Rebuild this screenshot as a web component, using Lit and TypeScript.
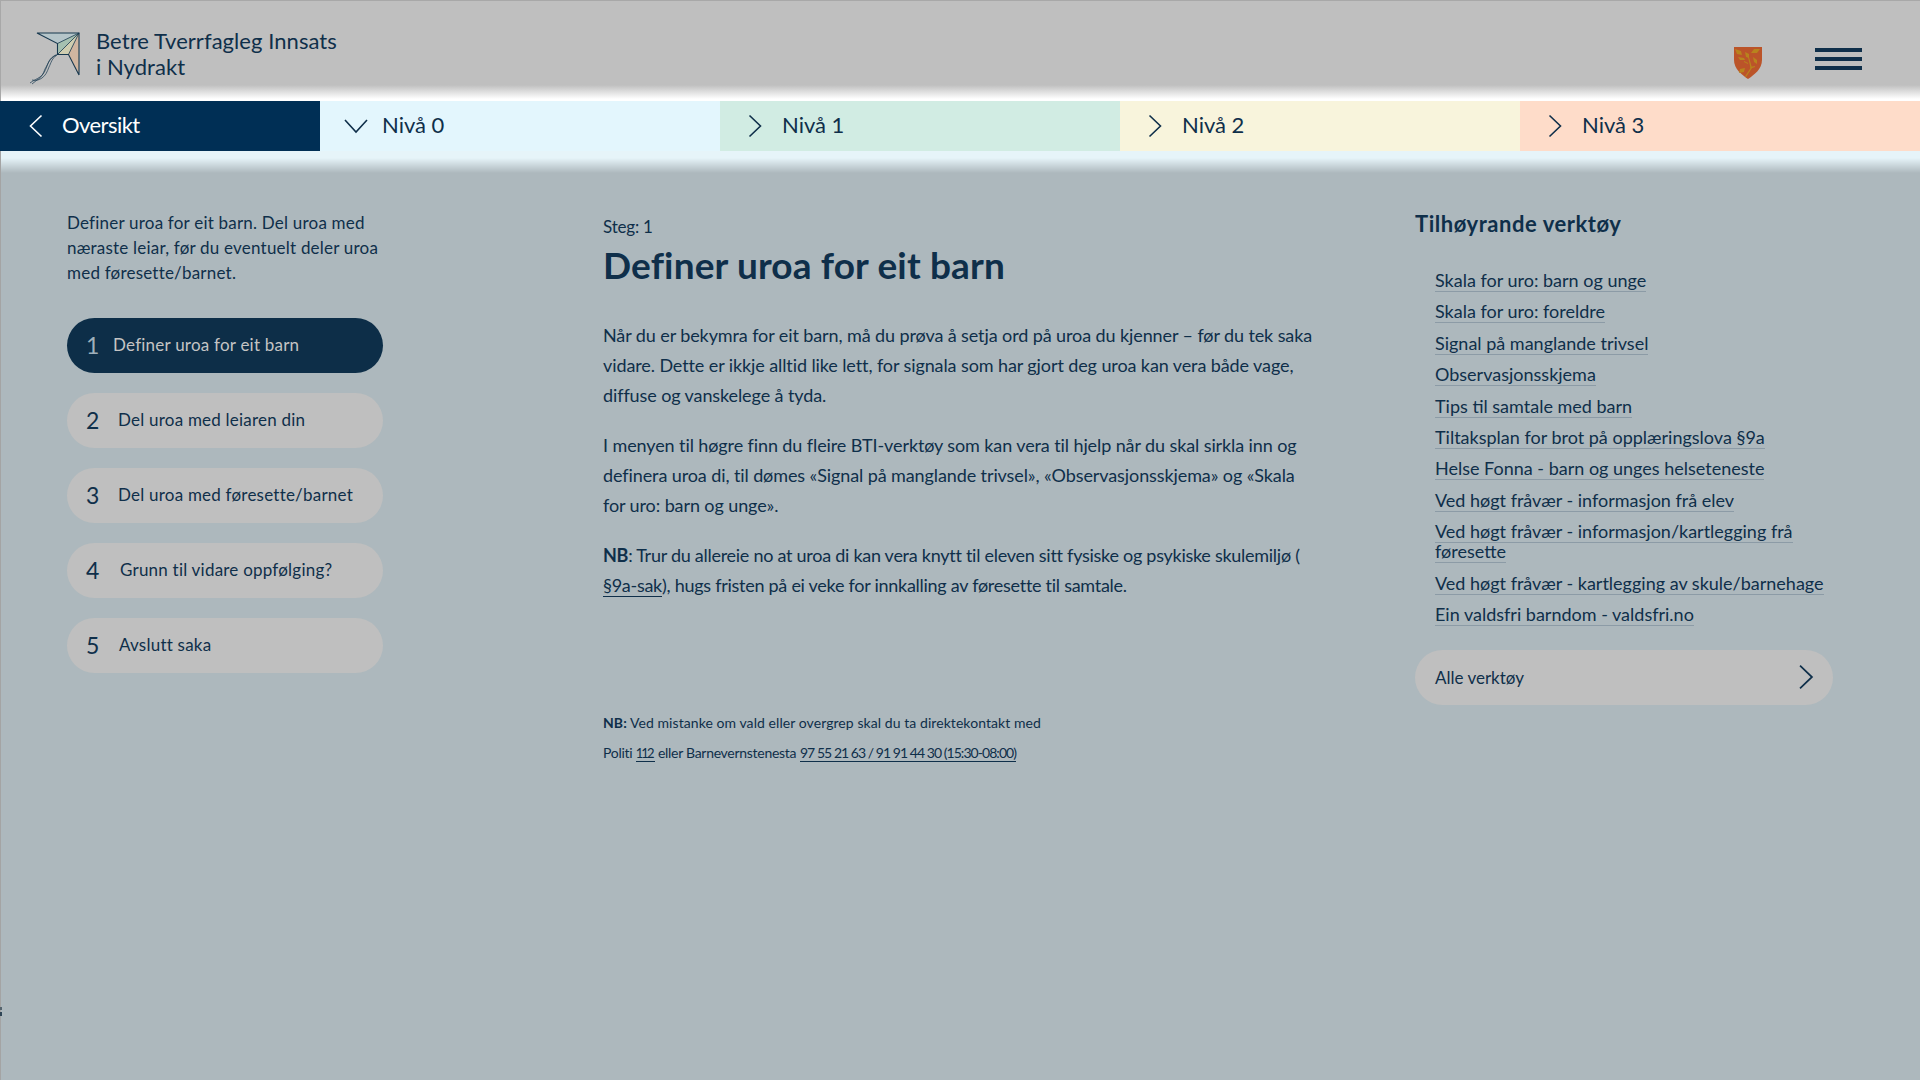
import { LitElement, html, css, svg } from "lit";
import { customElement } from "lit/decorators.js";

const chevron = (d: string) => html`<svg class="chev" viewBox="0 0 24 24" fill="none" stroke="currentColor" stroke-width="1.6"><path d=${d}></path></svg>`;
const RIGHT = "M6.5 1.5 L17.5 12 L6.5 22.5";
const LEFT = "M17.5 1.5 L6.5 12 L17.5 22.5";
const DOWN = "M1 6 L12 18 L23 6";

const steps = ["Definer uroa for eit barn", "Del uroa med leiaren din", "Del uroa med føresette/barnet", "Grunn til vidare oppfølging?", "Avslutt saka"];
const gaps = [27, 32, 32, 34, 33];
const tools = [
  "Skala for uro: barn og unge", "Skala for uro: foreldre", "Signal på manglande trivsel", "Observasjonsskjema",
  "Tips til samtale med barn", "Tiltaksplan for brot på opplæringslova §9a", "Helse Fonna - barn og unges helseteneste",
  "Ved høgt fråvær - informasjon frå elev", "Ved høgt fråvær - informasjon/kartlegging frå føresette",
  "Ved høgt fråvær - kartlegging av skule/barnehage", "Ein valdsfri barndom - valdsfri.no",
];

@customElement("app-root")
export class AppRoot extends LitElement {
  static styles = css`
    :host { display: block; position: relative; width: 1920px; min-height: 1080px; background: #adb8bd; color: #0f2f4a; font-family: "Lato", "Liberation Sans", sans-serif; box-sizing: border-box; overflow: hidden; }
    * { box-sizing: border-box; }
    header { height: 101px; display: flex; align-items: flex-start; background: linear-gradient(#bfbfbf 0, #bfbfbf 84px, #ffffff 98px); border-top: 1px solid #a8a8a8; border-left: 1px solid #a8a8a8; padding: 0 58px 0 28px; }
    .logo { width: 58px; height: 68px; margin-top: 27px; flex: none; }
    .brand { margin: 27px 0 0 9px; font-size: 22px; line-height: 26px; letter-spacing: 0.05px; flex: 1; }
    .crest { width: 30px; height: 34px; margin-top: 45px; }
    .burger { width: 47px; margin: 47px 0 0 52px; display: flex; flex-direction: column; gap: 5px; }
    .burger i { display: block; height: 4px; background: #0f2f4a; }
    nav { display: flex; height: 50px; }
    nav a { display: flex; align-items: center; font-size: 22px; width: 400px; padding: 0 0 3px 23px; gap: 15px; }
    nav a .chev { width: 24px; height: 24px; flex: none; margin-top: 3px; }
    nav a.back { width: 320px; background: #002f55; color: #fff; padding-left: 24px; gap: 14px; font-weight: 400; letter-spacing: -0.55px; }
    nav a.n0 { background: #e3f6fd; padding-left: 24px; gap: 14px; }
    nav a.n1 { background: #d1ece3; }
    nav a.n2 { background: #f8f4dc; }
    nav a.n3 { background: #fedcc9; }
    main { display: grid; grid-template-columns: 536px 812px 418px; padding: 0 0 0 66px; min-height: 929px; border-left: 1px solid #a4a4a4; background: linear-gradient(#e6f4f9 0, #e6f4f9 7px, #adb8bd 22px) no-repeat; background-size: 100% 22px; }
    .intro { width: 320px; margin: 59px 0 0; font-size: 17px; line-height: 25px; letter-spacing: 0.21px; }
    .steps { list-style: none; margin: 33px 0 0; padding: 0; width: 316px; display: flex; flex-direction: column; gap: 20px; }
    .steps li { height: 55px; border-radius: 28px; background: #bfbfbf; display: flex; align-items: center; padding: 0 0 2px 19px; font-size: 17px; letter-spacing: 0.22px; }
    .steps li b { font-weight: 400; font-size: 23px; width: var(--num); flex: none; }
    .steps li.on { background: #0d2e48; color: #c4c4c4; }
    .steps li.on b { color: #9fb0bb; }
    .center { padding-top: 64px; width: 716px; }
    .steg { font-size: 17px; line-height: 24px; letter-spacing: -0.2px; }
    h1 { font-size: 37px; line-height: 44px; font-weight: 700; margin: 4px 0 33px; letter-spacing: 0.15px; }
    .center p { margin: 0 0 20px; font-size: 18px; line-height: 30px; letter-spacing: -0.1px; }
    .center p.nb { letter-spacing: -0.27px; }
    .center a { color: inherit; text-decoration: none; border-bottom: 1px solid #0f2f4a; }
    .note { margin-top: 108px; font-size: 14px; line-height: 30px; letter-spacing: 0.07px; }
    .note .line2 { letter-spacing: -0.28px; }
    .note .em { font-size: 13px; letter-spacing: -1.9px; padding-right: 2px; }
    .note .phone { letter-spacing: -0.95px; }
    .right { padding-top: 58px; }
    h2 { margin: 0 0 31px; font-size: 22px; line-height: 30px; font-weight: 700; letter-spacing: 0.55px; }
    .tools { list-style: none; margin: 0; padding: 0 0 0 20px; display: flex; flex-direction: column; gap: 11.4px; }
    .tools li { font-size: 18px; line-height: 20px; }
    .tools span { border-bottom: 1px solid #8c9ba6; }
    .all { margin-top: 26px; height: 55px; border-radius: 28px; background: #bfbfbf; display: flex; align-items: center; justify-content: space-between; padding: 0 14px 0 20px; font-size: 17px; }
    .all .chev { width: 26px; height: 26px; }
    .edge { position: absolute; left: 0; top: 1007px; width: 2px; height: 9px; background: linear-gradient(#55646e 0 3px, transparent 3px 5px, #2f4556 5px); }
  `;

  render() {
    return html`
      <header>
        <svg class="logo" viewBox="0 0 58 68" fill="none" stroke="#17384f" stroke-width="1">
          <path d="M8 5H50L28.5 15.5Z" fill="#b5c5c9" stroke="none"></path>
          <path d="M28.5 15.5L50 5L28.5 26.5Z" fill="#a5c0b0" stroke="none"></path>
          <path d="M28.5 26.5L50 5L39.5 26.5Z" fill="#cfcdb0" stroke="none"></path>
          <path d="M39.5 26.5L50 5V47Z" fill="#d0b5a0" stroke="none"></path>
          <path d="M8 5H50V47L39.5 26.5H28.5V15.5Z" stroke-width="1.1"></path>
          <path d="M50 5L28.5 15.5M50 5L28.5 26.5M50 5L39.5 26.5" stroke-width=".8"></path>
          <path d="M28.5 26.5C21 29 20 33 18 38C16 43 15 46 11 49C8 51 5 52 1 55M28 27C23 30 22 35 20 39C18 44 17 47 13 50C10 52 7 53 3 52M27 27C20 31 19 36 16 41C14 46 13 49 8 52L3 56" stroke-width=".7"></path>
        </svg>
        <div class="brand">Betre Tverrfagleg Innsats<br />i Nydrakt</div>
        <svg class="crest" viewBox="0 0 30 34">
          <path d="M1 1H29V14C29 23 21 29 15 33C9 29 1 23 1 14Z" fill="#bb5429"></path>
          <g fill="#b8831d">${svg`
            <path d="M2 3L8 5L9 9L4 8Z"></path><path d="M27 3L21 3L18 7L24 7Z"></path>
            <path d="M12 6L16 8L16 12L13 11Z"></path><path d="M20 11L24 14L24 18L21 16Z"></path>
            <path d="M5 11L11 12L12 14L7 14Z"></path><path d="M7 23L12 22L11 26L6 27Z"></path>
            <path d="M17 21L22 20L22 21L18 22.5Z"></path>
            <path d="M15 11L16 11L19 22L13 31L12 30.5L17.5 22Z"></path>
            <path d="M11 15L15 17L15 18L11 16Z"></path>`}</g>
        </svg>
        <div class="burger"><i></i><i></i><i></i></div>
      </header>
      <nav>
        <a class="back">${chevron(LEFT)}Oversikt</a>
        <a class="n0">${chevron(DOWN)}Nivå 0</a>
        <a class="n1">${chevron(RIGHT)}Nivå 1</a>
        <a class="n2">${chevron(RIGHT)}Nivå 2</a>
        <a class="n3">${chevron(RIGHT)}Nivå 3</a>
      </nav>
      <main>
        <section>
          <p class="intro">Definer uroa for eit barn. Del uroa med næraste leiar, før du eventuelt deler uroa med føresette/barnet.</p>
          <ol class="steps">
            ${steps.map((s, i) => html`<li class=${i === 0 ? "on" : ""} style="--num:${gaps[i]}px"><b>${i + 1}</b>${s}</li>`)}
          </ol>
        </section>
        <section class="center">
          <div class="steg">Steg: 1</div>
          <h1>Definer uroa for eit barn</h1>
          <p>Når du er bekymra for eit barn, må du prøva å setja ord på uroa du kjenner – før du tek saka vidare. Dette er ikkje alltid like lett, for signala som har gjort deg uroa kan vera både vage, diffuse og vanskelege å tyda.</p>
          <p>I menyen til høgre finn du fleire BTI-verktøy som kan vera til hjelp når du skal sirkla inn og definera uroa di, til dømes «Signal på manglande trivsel», «Observasjonsskjema» og «Skala for uro: barn og unge».</p>
          <p class="nb"><strong>NB</strong>: Trur du allereie no at uroa di kan vera knytt til eleven sitt fysiske og psykiske skulemiljø ( <a>§9a-sak</a>), hugs fristen på ei veke for innkalling av føresette til samtale.</p>
          <div class="note"><strong>NB:</strong> Ved mistanke om vald eller overgrep skal du ta direktekontakt med<br /><span class="line2">Politi <a class="em">112</a> eller Barnevernstenesta</span> <a class="phone">97 55 21 63 / 91 91 44 30 (15:30-08:00)</a></div>
        </section>
        <aside class="right">
          <h2>Tilhøyrande verktøy</h2>
          <ul class="tools">${tools.map((t) => html`<li><span>${t}</span></li>`)}</ul>
          <div class="all">Alle verktøy ${chevron(RIGHT)}</div>
        </aside>
      </main>
      <div class="edge"></div>
    `;
  }
}
